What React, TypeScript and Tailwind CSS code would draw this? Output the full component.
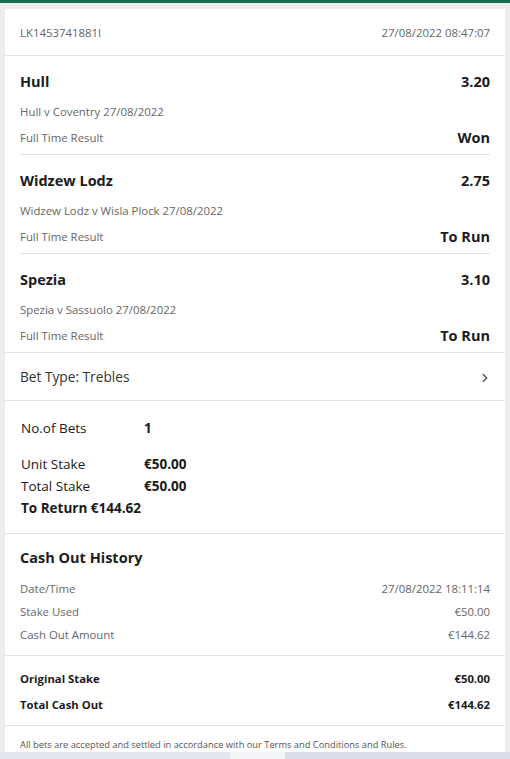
import { ChevronRight } from 'lucide-react';

const selections = [
  { team: 'Hull', odds: '3.20', event: 'Hull v Coventry 27/08/2022', status: 'Won' },
  { team: 'Widzew Lodz', odds: '2.75', event: 'Widzew Lodz v Wisla Plock 27/08/2022', status: 'To Run' },
  { team: 'Spezia', odds: '3.10', event: 'Spezia v Sassuolo 27/08/2022', status: 'To Run' },
];

function Selection({ s, last }: { s: (typeof selections)[number]; last: boolean }) {
  return (
    <div className="px-[15px]">
      <div className={last ? 'pt-[16px] pb-[6px]' : 'pt-[16px] pb-[6px] border-b border-[#e2e2e2]'}>
        <div className="flex justify-between leading-[20px] text-[14.5px] font-bold text-[#1c1c1c]">
          <span>{s.team}</span>
          <span>{s.odds}</span>
        </div>
        <div className="mt-[10px] leading-[20px] text-[11.4px] text-[#666]">{s.event}</div>
        <div className="mt-[6px] flex justify-between items-center leading-[20px]">
          <span className="text-[11.4px] text-[#666]">Full Time Result</span>
          <span className="text-[14.5px] font-bold text-[#1c1c1c]">{s.status}</span>
        </div>
      </div>
    </div>
  );
}

function Row({ label, value, bold }: { label: string; value: string; bold?: boolean }) {
  return (
    <div className={bold ? 'flex justify-between text-[11.3px] font-bold text-[#1c1c1c]' : 'flex justify-between text-[11.4px] text-[#666]'}>
      <span>{label}</span>
      <span>{value}</span>
    </div>
  );
}

export default function App() {
  return (
    <div
      className="w-[510px] h-[759px] bg-[#ececec] flex flex-col overflow-hidden"
      style={{ fontFamily: '"Open Sans", "Noto Sans", sans-serif' }}
    >
      <div className="h-[3px] bg-[#156f4f] shrink-0" />
      <div className="h-[6px] shrink-0" />
      <div className="ml-[5px] w-[500px] flex-1 bg-white flex flex-col">
        <div className="h-[47px] px-[15px] pt-[1px] flex items-center justify-between text-[11.4px] text-[#666] border-b border-[#e2e2e2] shrink-0">
          <span>LK1453741881I</span>
          <span>27/08/2022 08:47:07</span>
        </div>

        <div className="border-b border-[#e2e2e2]">
          {selections.map((s, i) => (
            <Selection key={s.team} s={s} last={i === selections.length - 1} />
          ))}
        </div>

        <div className="h-[48px] px-[15px] pt-[2px] flex items-center justify-between border-b border-[#e2e2e2] text-[13.7px] text-[#333]">
          <span>Bet Type: Trebles</span>
          <ChevronRight size={14} strokeWidth={2} className="text-[#444] mr-[-2px]" />
        </div>

        <div className="pl-[16px] pt-[16px] pb-[14px] border-b border-[#e2e2e2] text-[13.5px] text-[#1a1a1a] leading-[22px]">
          <div className="flex">
            <span className="w-[123px]">No.of Bets</span>
            <span className="font-bold">1</span>
          </div>
          <div className="flex mt-[14px]">
            <span className="w-[123px]">Unit Stake</span>
            <span className="font-bold">€50.00</span>
          </div>
          <div className="flex">
            <span className="w-[123px]">Total Stake</span>
            <span className="font-bold">€50.00</span>
          </div>
          <div className="font-bold">To Return €144.62</div>
        </div>

        <div className="px-[15px] pt-[13px] pb-[9px] border-b border-[#e2e2e2]">
          <div className="leading-[22px] text-[14.5px] font-bold text-[#1c1c1c]">Cash Out History</div>
          <div className="mt-[8px] leading-[23px]">
            <Row label="Date/Time" value="27/08/2022 18:11:14" />
            <Row label="Stake Used" value="€50.00" />
            <Row label="Cash Out Amount" value="€144.62" />
          </div>
        </div>

        <div className="px-[15px] pt-[12px] pb-[9px] border-b border-[#e2e2e2] leading-[22px]">
          <Row label="Original Stake" value="€50.00" bold />
          <div className="mt-[4px]">
            <Row label="Total Cash Out" value="€144.62" bold />
          </div>
        </div>

        <div className="px-[15px] pt-[12px] text-[9.3px] text-[#555] leading-[14px]">
          All bets are accepted and settled in accordance with our Terms and Conditions and Rules.
        </div>
      </div>
      <div className="h-[7px] shrink-0 flex">
        <div className="w-[230px] bg-[#e3e7ef]" />
        <div className="w-[55px] bg-[#f3f4f7]" />
        <div className="flex-1 bg-[#d9dee8]" />
      </div>
    </div>
  );
}
